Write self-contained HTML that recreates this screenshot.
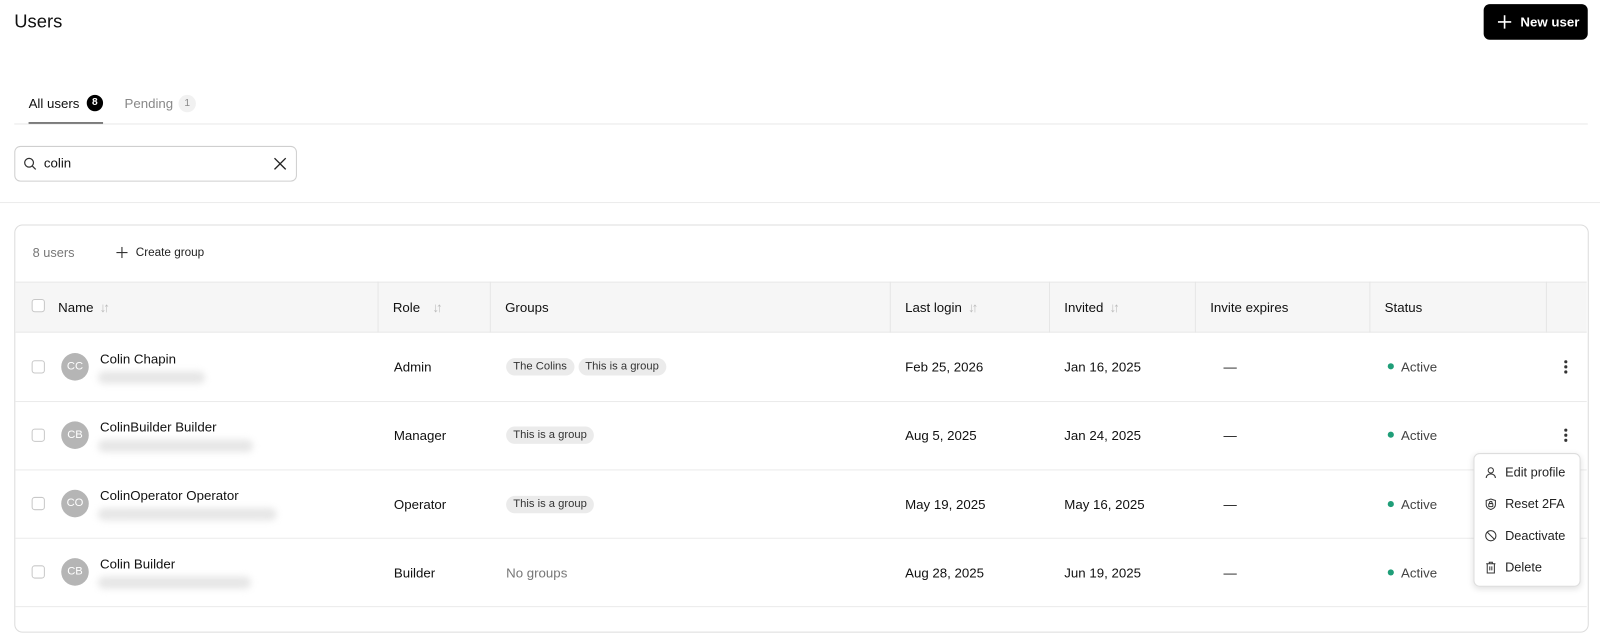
<!DOCTYPE html>
<html><head><style>
*{box-sizing:border-box;margin:0;padding:0}
body{width:1600px;height:612px;overflow:hidden;background:#fff;font-family:"Liberation Sans",sans-serif;color:#111;position:relative;font-size:13px}
#w{position:absolute;left:0;top:0;width:1568px;height:600px;transform:scale(1.0204);transform-origin:0 0}
.a{position:absolute}
.vl{position:absolute;top:276px;width:1px;height:50px;background:#e6e6e6}
.hl{position:absolute;left:15px;width:1540px;height:1px;background:#ebebeb}
.cb{position:absolute;width:13px;height:13px;border:1px solid #c8c8c8;border-radius:3px;background:#fff}
.av{position:absolute;left:60px;width:27px;height:27px;border-radius:50%;background:#b5b5b5;color:#fff;font-size:11px;text-align:center;line-height:27px}
.nm{position:absolute;left:98px;font-size:13px}
.blur{position:absolute;left:96px;height:12px;background:#e6e6e6;filter:blur(3.5px);border-radius:6px}
.tag{display:inline-block;background:#ebebeb;border-radius:9px;padding:0 7px;height:17px;line-height:17px;font-size:11px;color:#333;margin-right:4px}
.st{position:absolute;left:1360px;color:#444}
.st:before{content:"";display:inline-block;width:6px;height:6px;border-radius:50%;background:#1f9e78;margin-right:7px;vertical-align:2px}
.dash{position:absolute;left:1199px}
.dots{position:absolute;left:1533px;width:3px}
.dots i{display:block;width:2.5px;height:2.5px;border-radius:50%;background:#333;margin-bottom:2.5px}
.sort{color:#bbb;font-size:13px;margin-left:6px;letter-spacing:-3px}
.mi{position:absolute;left:1455px;font-size:12.5px;color:#222}
.mi svg{position:absolute;left:0;top:1px}
.mi span{position:absolute;left:20px;white-space:nowrap}
</style></head><body><div id="w">
<div class="a" style="left:14px;top:11px;font-size:18px">Users</div>
<div class="a" style="left:1454px;top:4px;width:102px;height:35px;background:#000;border-radius:6px;color:#fff;font-size:13px;font-weight:bold;line-height:35px">
<svg class="a" style="left:13px;top:10px" width="15" height="15" viewBox="0 0 15 15"><path d="M7.5 1v13M1 7.5h13" stroke="#fff" stroke-width="1.6"/></svg>
<span class="a" style="left:36px">New user</span></div>

<div class="a" style="left:28px;top:94px;font-size:13px">All users</div>
<div class="a" style="left:85px;top:93px;width:16px;height:16px;border-radius:50%;background:#000;color:#fff;font-size:10px;text-align:center;line-height:16px;font-weight:bold">8</div>
<div class="a" style="left:122px;top:94px;font-size:13px;color:#888">Pending</div>
<div class="a" style="left:175px;top:93px;width:17px;height:17px;border-radius:50%;background:#f1f1f1;color:#888;font-size:10px;text-align:center;line-height:17px">1</div>
<div class="a" style="left:28px;top:120px;width:73px;height:2px;background:#111"></div>
<div class="a" style="left:14px;top:121px;width:1542px;height:1px;background:#e8e8e8"></div>

<div class="a" style="left:14px;top:143px;width:277px;height:35px;border:1px solid #cfcfcf;border-radius:6px"></div>
<svg class="a" style="left:23px;top:154px" width="13" height="13" viewBox="0 0 13 13"><circle cx="5.5" cy="5.5" r="4.3" fill="none" stroke="#333" stroke-width="1.2"/><path d="M8.7 8.7L12 12" stroke="#333" stroke-width="1.2"/></svg>
<div class="a" style="left:43px;top:152px;font-size:13px">colin</div>
<svg class="a" style="left:268px;top:154px" width="13" height="13" viewBox="0 0 13 13"><path d="M1 1l11 11M12 1L1 12" stroke="#222" stroke-width="1.3"/></svg>
<div class="a" style="left:0;top:198px;width:1600px;height:1px;background:#ececec"></div>

<div class="a" style="left:14px;top:220px;width:1543px;height:400px;border:1px solid #dcdcdc;border-radius:8px"></div>
<div class="a" style="left:32px;top:241px;color:#777;font-size:12.5px">8 users</div>
<svg class="a" style="left:114px;top:242px" width="11" height="11" viewBox="0 0 11 11"><path d="M5.5 0v11M0 5.5h11" stroke="#333" stroke-width="1.1"/></svg>
<div class="a" style="left:133px;top:242px;font-size:11.5px;color:#222">Create group</div>

<div class="a" style="left:15px;top:276px;width:1540px;height:50px;background:#f6f6f6;border-top:1px solid #e8e8e8;border-bottom:1px solid #e8e8e8"></div>
<div class="vl" style="left:370px"></div><div class="vl" style="left:480px"></div><div class="vl" style="left:872px"></div><div class="vl" style="left:1028px"></div><div class="vl" style="left:1171px"></div><div class="vl" style="left:1342px"></div><div class="vl" style="left:1515px"></div>
<div class="cb" style="left:31px;top:293px"></div>
<div class="a" style="left:57px;top:294px">Name<span class="sort">↓↑</span></div>
<div class="a" style="left:385px;top:294px">Role<span class="sort" style="margin-left:12px">↓↑</span></div>
<div class="a" style="left:495px;top:294px">Groups</div>
<div class="a" style="left:887px;top:294px">Last login<span class="sort">↓↑</span></div>
<div class="a" style="left:1043px;top:294px">Invited<span class="sort">↓↑</span></div>
<div class="a" style="left:1186px;top:294px">Invite expires</div>
<div class="a" style="left:1357px;top:294px">Status</div>

<div class="cb" style="left:31px;top:353px"></div><div class="av" style="top:346px">CC</div>
<div class="nm" style="top:344px">Colin Chapin</div><div class="blur" style="top:364px;width:105px"></div>
<div class="a" style="left:386px;top:352px">Admin</div>
<div class="a" style="left:496px;top:350px"><span class="tag">The Colins</span><span class="tag">This is a group</span></div>
<div class="a" style="left:887px;top:352px">Feb 25, 2026</div>
<div class="a" style="left:1043px;top:352px">Jan 16, 2025</div>
<div class="dash" style="top:352px">—</div><div class="st" style="top:352px">Active</div>
<div class="dots" style="top:353px"><i></i><i></i><i></i></div>
<div class="hl" style="top:393px"></div>

<div class="cb" style="left:31px;top:420px"></div><div class="av" style="top:413px">CB</div>
<div class="nm" style="top:411px">ColinBuilder Builder</div><div class="blur" style="top:431px;width:152px"></div>
<div class="a" style="left:386px;top:419px">Manager</div>
<div class="a" style="left:496px;top:417px"><span class="tag">This is a group</span></div>
<div class="a" style="left:887px;top:419px">Aug 5, 2025</div>
<div class="a" style="left:1043px;top:419px">Jan 24, 2025</div>
<div class="dash" style="top:419px">—</div><div class="st" style="top:419px">Active</div>
<div class="dots" style="top:420px"><i></i><i></i><i></i></div>
<div class="hl" style="top:460px"></div>

<div class="cb" style="left:31px;top:487px"></div><div class="av" style="top:480px">CO</div>
<div class="nm" style="top:478px">ColinOperator Operator</div><div class="blur" style="top:498px;width:175px"></div>
<div class="a" style="left:386px;top:487px">Operator</div>
<div class="a" style="left:496px;top:485px"><span class="tag">This is a group</span></div>
<div class="a" style="left:887px;top:487px">May 19, 2025</div>
<div class="a" style="left:1043px;top:487px">May 16, 2025</div>
<div class="dash" style="top:487px">—</div><div class="st" style="top:487px">Active</div>
<div class="hl" style="top:527px"></div>

<div class="cb" style="left:31px;top:554px"></div><div class="av" style="top:547px">CB</div>
<div class="nm" style="top:545px">Colin Builder</div><div class="blur" style="top:565px;width:150px"></div>
<div class="a" style="left:386px;top:554px">Builder</div>
<div class="a" style="left:496px;top:554px;color:#777">No groups</div>
<div class="a" style="left:887px;top:554px">Aug 28, 2025</div>
<div class="a" style="left:1043px;top:554px">Jun 19, 2025</div>
<div class="dash" style="top:554px">—</div><div class="st" style="top:554px">Active</div>
<div class="hl" style="top:594px"></div>

<div class="a" style="left:1444px;top:444px;width:105px;height:131px;background:#fff;border:1px solid #ddd;border-radius:6px;box-shadow:0 2px 6px rgba(0,0,0,.12)"></div>
<div class="mi" style="top:456px"><svg width="12" height="12" viewBox="0 0 12 12" fill="none" stroke="#333" stroke-width="1"><circle cx="6" cy="4" r="2.6"/><path d="M1.5 11.5c0-2.5 2-4 4.5-4s4.5 1.5 4.5 4"/></svg><span>Edit profile</span></div>
<div class="mi" style="top:487px"><svg width="12" height="12" viewBox="0 0 12 12" fill="none" stroke="#333" stroke-width="1"><path d="M6 1l4.5 1.5v4c0 2.5-2 4-4.5 4.8C3.5 10.5 1.5 9 1.5 6.5v-4z"/><rect x="4" y="5.5" width="4" height="3" rx=".5"/><path d="M4.8 5.5V4.6a1.2 1.2 0 0 1 2.4 0v.9"/></svg><span>Reset 2FA</span></div>
<div class="mi" style="top:518px"><svg width="12" height="12" viewBox="0 0 12 12" fill="none" stroke="#333" stroke-width="1"><circle cx="6" cy="6" r="5"/><path d="M2.5 2.5l7 7"/></svg><span>Deactivate</span></div>
<div class="mi" style="top:549px"><svg width="12" height="12" viewBox="0 0 12 12" fill="none" stroke="#333" stroke-width="1"><path d="M1.5 2.5h9M4.5 2.5V1h3v1.5M2.5 2.5v9h7v-9M5 5v4M7 5v4"/></svg><span>Delete</span></div>
</div></body></html>
